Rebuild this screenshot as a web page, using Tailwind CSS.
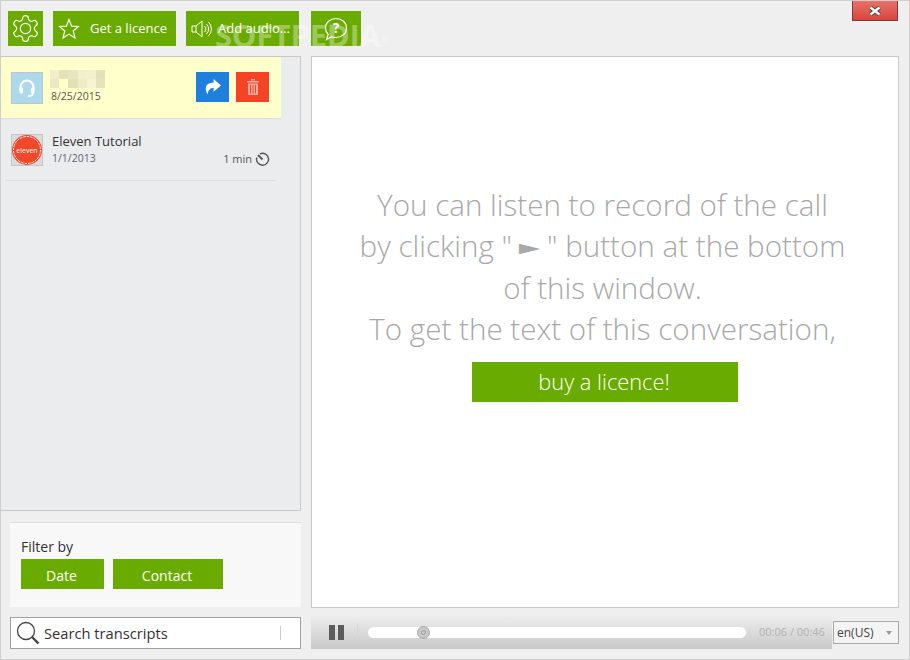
<!DOCTYPE html>
<html lang="en">
<head>
<meta charset="UTF-8" />
<title>Transcripts</title>
<script src="https://cdn.jsdelivr.net/npm/@tailwindcss/browser@4"></script>
</head>
<body class="bg-[#efefef] font-['Open_Sans',sans-serif] text-[#333]">
<div class="relative w-[910px] h-[660px] border border-[#cfcfcf] overflow-hidden">

  <!-- toolbar -->
  <div class="flex h-[55px] pt-[10px] pl-[7px] text-white text-[13px]">
    <button class="w-[35px] h-[35px] bg-[#6aab00] flex items-center justify-center">
      <svg width="31" height="31" viewBox="0 0 24 24" fill="none" stroke="white" stroke-width="0.9"><path d="M12.22 2h-.44a2 2 0 0 0-2 2v.18a2 2 0 0 1-1 1.73l-.43.25a2 2 0 0 1-2 0l-.15-.08a2 2 0 0 0-2.73.73l-.22.38a2 2 0 0 0 .73 2.73l.15.1a2 2 0 0 1 1 1.72v.51a2 2 0 0 1-1 1.74l-.15.09a2 2 0 0 0-.73 2.73l.22.38a2 2 0 0 0 2.73.73l.15-.08a2 2 0 0 1 2 0l.43.25a2 2 0 0 1 1 1.73V20a2 2 0 0 0 2 2h.44a2 2 0 0 0 2-2v-.18a2 2 0 0 1 1-1.73l.43-.25a2 2 0 0 1 2 0l.15.08a2 2 0 0 0 2.73-.73l.22-.39a2 2 0 0 0-.73-2.73l-.15-.08a2 2 0 0 1-1-1.74v-.5a2 2 0 0 1 1-1.74l.15-.09a2 2 0 0 0 .73-2.73l-.22-.38a2 2 0 0 0-2.73-.73l-.15.08a2 2 0 0 1-2 0l-.43-.25a2 2 0 0 1-1-1.73V4a2 2 0 0 0-2-2z"/><circle cx="12" cy="12" r="4"/></svg>
    </button>
    <button class="ml-[10px] w-[123px] h-[35px] bg-[#6aab00] flex items-center pl-[5px] pt-[1px]">
      <svg class="-mt-[1px]" width="22" height="22" viewBox="0 0 22 22" fill="none" stroke="white" stroke-width="1.2"><path d="M11 1.500l2.600 6.600 7 .4-5.400 4.500 1.800 6.900-6-3.800-6 3.800 1.800-6.900L1.400 8.500l7-.4z"/></svg>
      <span class="ml-[10px] whitespace-nowrap">Get a licence</span>
    </button>
    <button class="ml-[10px] w-[113px] h-[35px] bg-[#6aab00] flex items-center pl-[5px] pt-[1px]">
      <svg class="-mt-[1px]" width="22" height="22" viewBox="0 0 22 22" fill="none" stroke="white" stroke-width="1"><path d="M1 8h4v6H1zM5 8l6-5v16l-6-5"/><path d="M13.500 8a4 4 0 0 1 0 6M15.500 6a7 7 0 0 1 0 10M17.500 4a10 10 0 0 1 0 14"/></svg>
      <span class="ml-[5px] whitespace-nowrap">Add audio...</span>
    </button>
    <button class="ml-[12px] w-[50px] h-[35px] bg-[#6aab00] flex items-center justify-center">
      <svg width="26" height="26" viewBox="0 0 26 26" fill="none" stroke="white" stroke-width="1.200"><path d="M13 2.500c6 0 10.500 4 10.500 9.500s-4.500 9.500-10.500 9.500c-1.500 0-3-.3-4.300-.8L3.500 23.500l1.700-5A9.500 9.500 0 0 1 2.500 12C2.500 6.500 7 2.500 13 2.500z"/><text x="13" y="17" text-anchor="middle" fill="white" stroke="none" font-size="14" font-weight="700" font-family="Open Sans">?</text></svg>
    </button>
  </div>

  <!-- close button -->
  <button class="absolute right-[11px] top-0 w-[46px] h-[20px] bg-gradient-to-b from-[#e9716a] to-[#d9433a] border border-[#7d3a44] border-t-0 flex items-center justify-center">
    <svg width="12" height="10" viewBox="0 0 12 10"><path d="M1.500 1.500l9 7M10.500 1.500l-9 7" stroke="#3f3f3f" stroke-width="4.200"/><path d="M1.500 1.500l9 7M10.500 1.500l-9 7" stroke="white" stroke-width="2.400"/></svg>
  </button>

  <div class="flex">
    <!-- left column -->
    <div class="w-[300px] flex flex-col">
      <div class="h-[455px] bg-[#ebecee] border-t border-r border-b border-[#c8c8c8]">
        <div class="flex w-[280px] h-[62px] bg-[#ffffcc] border-b border-[#dcdcdc]">
          <div class="w-[32px] h-[32px] mt-[15px] ml-[10px] bg-[#acd9ec] border border-[#c4c4c4] flex items-center justify-center">
            <svg width="20" height="20" viewBox="0 0 20 20" fill="none" stroke="white" stroke-width="2.200"><path d="M3.500 12V9a6.500 6.500 0 0 1 13 0v3"/><rect x="2.500" y="9.500" width="3.500" height="6" rx="1.500" fill="white" stroke="none"/><rect x="14" y="9.500" width="3.500" height="6" rx="1.500" fill="white" stroke="none"/><path d="M16 15c0 2-2 3-5 3" stroke-width="1.800"/></svg>
          </div>
          <div class="ml-[7px]">
            <div class="mt-[13px] grid grid-cols-6 w-[55px] h-[18px]">
              <div class="bg-[#f2eecb]"></div><div class="bg-[#e4e2b8]"></div><div class="bg-[#e8e6bf]"></div><div class="bg-[#f1efcc]"></div><div class="bg-[#f3f0cf]"></div><div class="bg-[#e3e1b7]"></div>
              <div class="bg-[#ebe9c2]"></div><div class="bg-[#ffffcc]"></div><div class="bg-[#e2e0b5]"></div><div class="bg-[#eeecc7]"></div><div class="bg-[#f6f4d2]"></div><div class="bg-[#e5e3ba]"></div>
            </div>
            <div class="text-[10.5px] leading-[15px] text-[#555] ml-[1px] mt-[1px]">8/25/2015</div>
          </div>
          <button class="ml-auto mt-[15px] w-[33px] h-[30px] bg-[#1e7fdc] flex items-center justify-center">
            <svg width="17" height="16" viewBox="0 0 16 15" fill="white"><path d="M9 0L16 6l-7 6V8.500C6 8.500 4 10 3.500 14.500 .5 10 .5 3.500 9 3.300z"/></svg>
          </button>
          <button class="ml-[7px] mr-[12px] mt-[15px] w-[33px] h-[30px] bg-[#f44325] flex items-center justify-center">
            <svg width="14" height="18" viewBox="0 0 14 18" fill="#f7a9a0"><path d="M1 3h12v1.500H1zM5 1h4v1.500H5z"/><path fill-rule="evenodd" d="M2 5.500h10V17H2zM4 7v8.500h1V7zM6.500 7v8.500h1V7zM9 7v8.500h1V7z"/></svg>
          </button>
        </div>
        <div class="flex w-[270px] h-[62px] ml-[5px] border-b border-[#dcdddf]">
          <div class="w-[32px] h-[32px] mt-[15px] ml-[5px] bg-[#dcdcdc] border border-[#c4c4c4] flex items-center justify-center">
            <svg width="30" height="30" viewBox="0 0 30 30"><circle cx="15" cy="15" r="15" fill="#f1472a"/><circle cx="15" cy="15" r="13.500" fill="none" stroke="white" stroke-width="1" stroke-dasharray="2.500 1"/><text x="15" y="17.500" text-anchor="middle" fill="white" font-size="7" font-family="Open Sans">eleven</text></svg>
          </div>
          <div class="ml-[9px] mt-[13px]">
            <div class="text-[13px] leading-[18px] text-[#333]">Eleven Tutorial</div>
            <div class="text-[10.5px] leading-[15px] text-[#665f77] mt-[1px]">1/1/2013</div>
          </div>
          <div class="ml-auto mt-[31px] mr-[6px] flex items-center h-[18px] text-[11px] text-[#555]">
            <span>1 min</span>
            <svg class="ml-[3px]" width="15" height="15" viewBox="0 0 15 15" fill="none" stroke="#555" stroke-width="1.400"><path d="M5 1.800A6 6 0 1 1 1.800 5.500"/><path d="M3 3l4.500 4.500" stroke-width="1.800"/></svg>
          </div>
        </div>
      </div>

      <div class="ml-[9px] mt-[11px] h-[85px] bg-[#f8f8f8] border-t border-[#dedede] pl-[11px]">
        <div class="text-[14px] leading-[19px] mt-[14px]">Filter by</div>
        <div class="flex mt-[3px] text-white text-[14px]">
          <button class="w-[83px] h-[30px] bg-[#6aab00] pr-[2px] pt-[2px]">Date</button>
          <button class="ml-[9px] w-[110px] h-[30px] bg-[#6aab00] pr-[2px] pt-[2px]">Contact</button>
        </div>
      </div>

      <div class="ml-[9px] mt-[10px] h-[32px] bg-white border border-[#a0a0a0] flex items-center">
        <svg class="ml-[5px]" width="24" height="24" viewBox="0 0 24 24" fill="none" stroke="#444" stroke-width="1.300"><circle cx="10" cy="10" r="8.500"/><path d="M16 16l6.500 6.500" stroke-width="2.400"/></svg>
        <span class="ml-[4px] text-[14.7px]">Search transcripts</span>
        <div class="ml-auto mr-[19px] w-px h-[14px] bg-[#ccc]"></div>
      </div>
    </div>

    <!-- right column -->
    <div class="ml-[10px] w-[588px] flex flex-col">
      <div class="h-[552px] bg-white border border-[#c8c8c8] flex flex-col items-center pt-[127px]">
        <p class="mr-[5px] text-[29.6px] leading-[41px] font-light text-[#a8a8a8] text-center whitespace-nowrap">You can listen to record of the call<span class="block h-[42px]">by clicking "<span class="inline-block w-[35px] h-[20px] leading-[20px] text-center font-['DejaVu_Sans'] scale-x-[1.2] scale-y-[0.6] translate-y-[1px]">►</span>" button at the bottom</span>of this window.<br>To get the text of this conversation,</p>
        <button class="mt-[13px] w-[266px] h-[40px] bg-[#6aab00] text-white text-[21.800px] font-light pt-[1px] pr-[2px]">buy a licence!</button>
      </div>
      <div class="flex mt-[7px]">
        <div class="w-[521px] h-[34px] bg-gradient-to-b from-[#efefef] to-[#c8c8c8] flex items-center">
          <div class="ml-[18px] flex gap-[3px]"><div class="w-[6px] h-[15px] bg-[#5c5c5c]"></div><div class="w-[6px] h-[15px] bg-[#5c5c5c]"></div></div>
          <div class="ml-[13px] w-px h-[18px] bg-[#d6d6d6]"></div>
          <div class="relative ml-[10px] w-[378px] h-[11px] rounded-full bg-white">
            <div class="absolute left-[49px] -top-px w-[13px] h-[13px] rounded-full bg-[#c9c9c9] border border-[#a5a5a5] flex items-center justify-center"><div class="w-[5px] h-[5px] rounded-full border border-[#999]"></div></div>
          </div>
          <span class="ml-[13px] text-[11px] text-[#b2b2b2] whitespace-nowrap">00:06 / 00:46</span>
        </div>
        <div class="ml-px mt-[6px] w-[66px] h-[23px] bg-[#f4f4f4] border border-[#a9a9a9] flex items-center pl-[3px] text-[12px] text-[#444]">
          en(US)
          <div class="ml-auto mr-[6px] w-0 h-0 border-x-[3px] border-x-transparent border-t-[4px] border-t-[#999]"></div>
        </div>
      </div>
    </div>
  </div>

  <!-- watermark -->
  <div class="absolute left-[214px] top-[16px] text-[31px] leading-[36px] tracking-[-0.3px] font-bold text-white/35 whitespace-nowrap pointer-events-none">SOFTPEDIA<sup class="text-[9px] font-normal">®</sup></div>
</div>
</body>
</html>
